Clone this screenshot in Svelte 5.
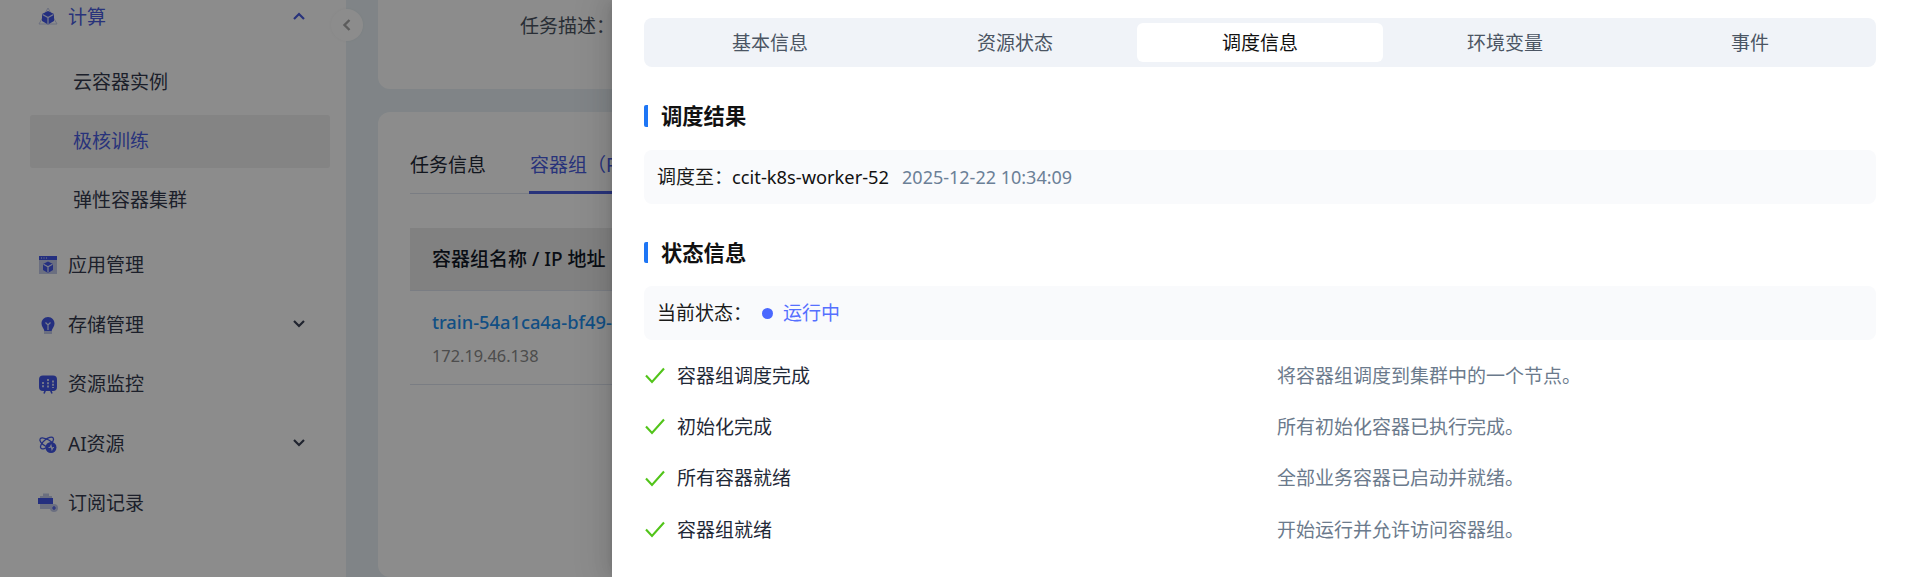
<script>
  const tabs = ['基本信息', '资源状态', '调度信息', '环境变量', '事件'];
  const steps = [
    ['容器组调度完成', '将容器组调度到集群中的一个节点。'],
    ['初始化完成', '所有初始化容器已执行完成。'],
    ['所有容器就绪', '全部业务容器已启动并就绪。'],
    ['容器组就绪', '开始运行并允许访问容器组。']
  ];
</script>

<div class="page">
  <aside class="sidebar">
    <div class="menu-row brand">
      <svg class="icon" viewBox="0 0 20 20">
        <path class="pale-line" d="M10 1 L19 17 H1 Z" />
        <path class="solid" d="M10 4 L16 7 V14 L10 17.5 L4 14 V7 Z" />
        <path class="cut" d="M4.5 7.5 L10 10.5 L15.5 7.5 M10 10.5 V17" />
      </svg>
      <span>计算</span>
      <svg class="chev" viewBox="0 0 14 10"><path d="M2 8 L7 3 L12 8" /></svg>
    </div>
    <div class="submenu">
      <div class="sub">云容器实例</div>
      <div class="sub active">极核训练</div>
      <div class="sub">弹性容器集群</div>
    </div>
    <div class="menu-list">
      <div class="menu-row">
        <svg class="icon" viewBox="0 0 20 20">
          <rect class="pale" x="1" y="1" width="18" height="18" />
          <rect class="solid" x="1" y="1" width="18" height="4" />
          <path class="cut" d="M3 3 H4 M5.500 3 H6.500 M8 3 H9" />
          <path class="solid" d="M10 6.5 L15 9 V15 L10 18 L5 15 V9 Z" />
          <path class="cut" d="M5.5 9.3 L10 11.8 L14.500 9.3 M10 11.800 V17.500" />
        </svg>
        <span>应用管理</span>
      </div>
      <div class="menu-row">
        <svg class="icon" viewBox="0 0 20 20">
          <path class="pale" d="M6 15 H14 V19 H6 Z" />
          <path class="solid" d="M10 2 C14 2 16.500 5 16.500 8.500 C16.500 11.500 14.500 13 13.500 16 H6.500 C5.500 13 3.500 11.500 3.500 8.500 C3.500 5 6 2 10 2 Z" />
          <path class="cut" d="M7.500 7.500 L10 10 L12.500 7.500 M10 10 V15" />
        </svg>
        <span>存储管理</span>
        <svg class="chev" viewBox="0 0 14 10"><path d="M2 2 L7 7 L12 2" /></svg>
      </div>
      <div class="menu-row">
        <svg class="icon" viewBox="0 0 20 20">
          <rect class="solid" x="1" y="1.500" width="18" height="15.500" rx="4" />
          <path class="cut dotted" d="M5 8 V14 M10 5 V14 M15 6.500 V14" />
          <path class="stroke" d="M7.500 16 L6 19.500 M12.500 16 L14 19.500" />
        </svg>
        <span>资源监控</span>
      </div>
      <div class="menu-row">
        <svg class="icon" viewBox="0 0 20 20">
          <ellipse class="stroke-thin" cx="9" cy="9" rx="8" ry="3.500" transform="rotate(30 9 9)" />
          <ellipse class="stroke-thin" cx="9" cy="9" rx="8" ry="3.500" transform="rotate(-40 9 9)" />
          <circle class="solid" cx="13" cy="13.500" r="5.500" />
          <path class="cut" d="M10.500 13.500 H12 L13 11.500 L14 15.500 L15 13.500 H16" />
        </svg>
        <span>AI资源</span>
        <svg class="chev" viewBox="0 0 14 10"><path d="M2 2 L7 7 L12 2" /></svg>
      </div>
      <div class="menu-row">
        <svg class="icon" viewBox="0 0 20 20">
          <path class="pale" d="M2 3 H14 V7 H2 Z M5 0.500 H11 V3 H5 Z" />
          <rect class="solid" x="0" y="5" width="15" height="6" />
          <path class="pale" d="M2 11 H15 V16 H2 Z" />
          <circle class="pale" cx="16" cy="15" r="4" />
          <path class="plus" d="M14 15 H18 M16 13 V17" />
        </svg>
        <span>订阅记录</span>
      </div>
    </div>
  </aside>

  <main class="main">
    <section class="card top-card">
      <div class="desc-label">任务描述：</div>
    </section>
    <section class="card detail-card">
      <div class="detail-tabs">
        <div class="detail-tab">任务信息</div>
        <div class="detail-tab on">容器组（Pod）</div>
      </div>
      <div class="thead">容器组名称 / IP 地址</div>
      <div class="trow">
        <div class="pod-link">train-54a1ca4a-bf49-</div>
        <div class="pod-ip">172.19.46.138</div>
      </div>
    </section>
  </main>

  <button class="collapse" aria-label="收起">
    <svg viewBox="0 0 10 14"><path d="M7.500 2 L2.500 7 L7.500 12" /></svg>
  </button>

  <div class="mask"></div>

  <div class="drawer">
    <div class="seg">
      {#each tabs as t, i}
        <div class="seg-item" class:current={i === 2}>{t}</div>
      {/each}
    </div>

    <h3 class="title">调度结果</h3>
    <div class="panel">
      <span>调度至：</span><span class="node">ccit-k8s-worker-52</span><span class="time">2025-12-22 10:34:09</span>
    </div>

    <h3 class="title">状态信息</h3>
    <div class="panel">
      <span class="state-label">当前状态：</span>
      <i class="dot"></i>
      <span class="running">运行中</span>
    </div>

    <div class="steps">
      {#each steps as s}
        <div class="step">
          <div class="step-name">
            <svg class="check" viewBox="0 0 20 17"><path d="M1 8.500 L7 15 L19 1.500" /></svg>
            <span>{s[0]}</span>
          </div>
          <div class="step-desc">{s[1]}</div>
        </div>
      {/each}
    </div>
  </div>
</div>

<style>
  :global(body) {
    margin: 0;
    background: #fff;
  }
  .page {
    position: relative;
    width: 1908px;
    height: 577px;
    overflow: hidden;
    display: flex;
    background: #e9f1f6;
    font-family: "Noto Sans", "Noto Sans CJK SC", sans-serif;
    font-size: 19px;
    line-height: 28px;
    color: #1f2937;
  }

  .sidebar {
    width: 346px;
    flex: none;
    background: #fff;
    box-sizing: border-box;
    padding: 0 16px 0 30px;
    height: 577px;
    overflow: hidden;
  }
  .menu-row {
    display: flex;
    align-items: center;
    height: 53px;
    padding-left: 8px;
    color: #333a4d;
    position: relative;
  }
  .menu-row > span {
    margin-left: 10px;
  }
  .menu-row.brand {
    margin-top: -9.5px;
    color: #4a5de0;
  }
  .menu-list {
    display: flex;
    flex-direction: column;
    gap: 6.5px;
  }
  .icon {
    width: 20px;
    height: 20px;
    flex: none;
  }
  .solid { fill: #4257e8; }
  .pale { fill: #c4cbea; }
  .pale-line { fill: none; stroke: #c4cbea; stroke-width: 1; }
  .cut { fill: none; stroke: #dfe3fb; stroke-width: 1.2; }
  .dotted { stroke-dasharray: 2 1.2; stroke-width: 1.8; }
  .stroke { fill: none; stroke: #4257e8; stroke-width: 1.6; }
  .stroke-thin { fill: none; stroke: #4257e8; stroke-width: 1.3; }
  .plus { fill: none; stroke: #4257e8; stroke-width: 1.2; }
  .chev {
    position: absolute;
    left: 262px;
    top: 50%;
    width: 14px;
    height: 10px;
    margin-top: -6px;
    fill: none;
    stroke: #3b4257;
    stroke-width: 2.2;
  }
  .brand .chev { stroke: #4a5de0; }
  .submenu {
    display: flex;
    flex-direction: column;
    gap: 6px;
    padding: 12px 0;
  }
  .sub {
    height: 53px;
    line-height: 53px;
    padding-left: 43px;
    border-radius: 3px;
    color: #333a4d;
  }
  .sub.active {
    background: #f0f0f0;
    color: #4a5de0;
  }

  .main {
    flex: 1;
    min-width: 0;
    padding-left: 32px;
    margin-top: -60px;
    display: flex;
    flex-direction: column;
    gap: 23px;
  }
  .card {
    background: #fff;
    border-radius: 12px 0 0 12px;
    box-sizing: border-box;
  }
  .top-card {
    height: 149px;
    flex: none;
    padding: 72px 0 0 142px;
  }
  .desc-label { color: #4b5563; }
  .detail-card {
    flex: 1;
    padding: 0 0 0 32px;
  }
  .detail-tabs {
    display: flex;
    gap: 43px;
    height: 82px;
    box-sizing: border-box;
    border-bottom: 1px solid #dfe3ee;
    padding-top: 39px;
    white-space: nowrap;
  }
  .detail-tab {
    height: 43px;
    box-sizing: border-box;
  }
  .detail-tab.on {
    color: #4a5de0;
    border-bottom: 3px solid #4a5de0;
    padding-left: 1px;
  }
  .thead {
    margin-top: 34px;
    height: 62px;
    line-height: 62px;
    padding-left: 22px;
    background: #ececec;
    border-bottom: 1px solid #dfe3ee;
    font-weight: 500;
    color: #111827;
    white-space: nowrap;
  }
  .trow {
    height: 94px;
    box-sizing: border-box;
    padding: 17px 0 0 22px;
    border-bottom: 1px solid #dfe3ee;
  }
  .pod-link {
    color: #1e90f0;
    font-size: 18.3px;
    font-weight: 500;
    white-space: nowrap;
  }
  .pod-ip {
    margin-top: 6px;
    font-size: 16.33px;
    color: #8c8c8c;
  }

  .collapse {
    position: absolute;
    left: 331px;
    top: 9px;
    width: 32px;
    height: 32px;
    padding: 0;
    border: none;
    border-radius: 50%;
    background: #fff;
    box-shadow: 0 0 3px rgba(0, 0, 0, 0.05);
    display: flex;
    align-items: center;
    justify-content: center;
  }
  .collapse svg {
    width: 10px;
    height: 14px;
    fill: none;
    stroke: #a8a8a8;
    stroke-width: 2.4;
  }

  .mask {
    position: absolute;
    inset: 0;
    background: rgba(0, 0, 0, 0.45);
  }

  .drawer {
    position: absolute;
    top: 0;
    right: 0;
    bottom: 0;
    width: 1296px;
    box-sizing: border-box;
    padding: 18px 32px 0 32px;
    background: #fff;
    box-shadow: -6px 0 16px 0 rgba(0, 0, 0, 0.08), -3px 0 6px -4px rgba(0, 0, 0, 0.12), -9px 0 28px 8px rgba(0, 0, 0, 0.05);
    color: #1a1a1a;
  }
  .seg {
    display: grid;
    grid-template-columns: repeat(5, 1fr);
    height: 49px;
    box-sizing: border-box;
    padding: 5px 0.5px;
    background: #f0f3f8;
    border-radius: 8px;
  }
  .seg-item {
    display: flex;
    align-items: center;
    justify-content: center;
    border-radius: 6px;
    color: #4b5563;
  }
  .seg-item:nth-child(1) { padding-left: 5px; }
  .seg-item:nth-child(2) { padding-left: 2.4px; }
  .seg-item:nth-child(4) { padding-right: 2.4px; }
  .seg-item:nth-child(5) { padding-right: 5px; }
  .seg-item.current {
    background: #fff;
    color: #111;
  }
  .title {
    margin: 38px 0 23px;
    height: 21.5px;
    line-height: 21.5px;
    padding-left: 13px;
    border-left: 4px solid #1e76f5;
    border-radius: 2px;
    font-size: 21.3px;
    font-weight: 600;
    color: #111;
  }
  .panel {
    display: flex;
    align-items: center;
    height: 54px;
    padding-left: 13px;
    background: #f9fafc;
    border-radius: 8px;
    white-space: nowrap;
  }
  .node {
    font-size: 18.3px;
    margin-left: -1px;
    color: #111;
  }
  .time {
    margin-left: 13px;
    font-size: 18px;
    color: #6b8097;
  }
  .state-label {
    width: 105px;
  }
  .dot {
    width: 11px;
    height: 11px;
    border-radius: 50%;
    background: #4a68ff;
    margin-right: 10px;
  }
  .running {
    color: #5570ff;
  }
  .steps {
    margin-top: 10px;
    display: grid;
    grid-auto-rows: 51.3px;
  }
  .step {
    display: grid;
    grid-template-columns: 1fr 1fr;
    column-gap: 34px;
    align-items: center;
  }
  .step-name {
    display: flex;
    align-items: center;
    gap: 12px;
    color: #1f2937;
  }
  .check {
    width: 20px;
    height: 17px;
    margin-left: 1px;
    flex: none;
    fill: none;
    stroke: #52c41a;
    stroke-width: 2.1;
  }
  .step-desc {
    color: #6b7a8c;
  }
</style>
